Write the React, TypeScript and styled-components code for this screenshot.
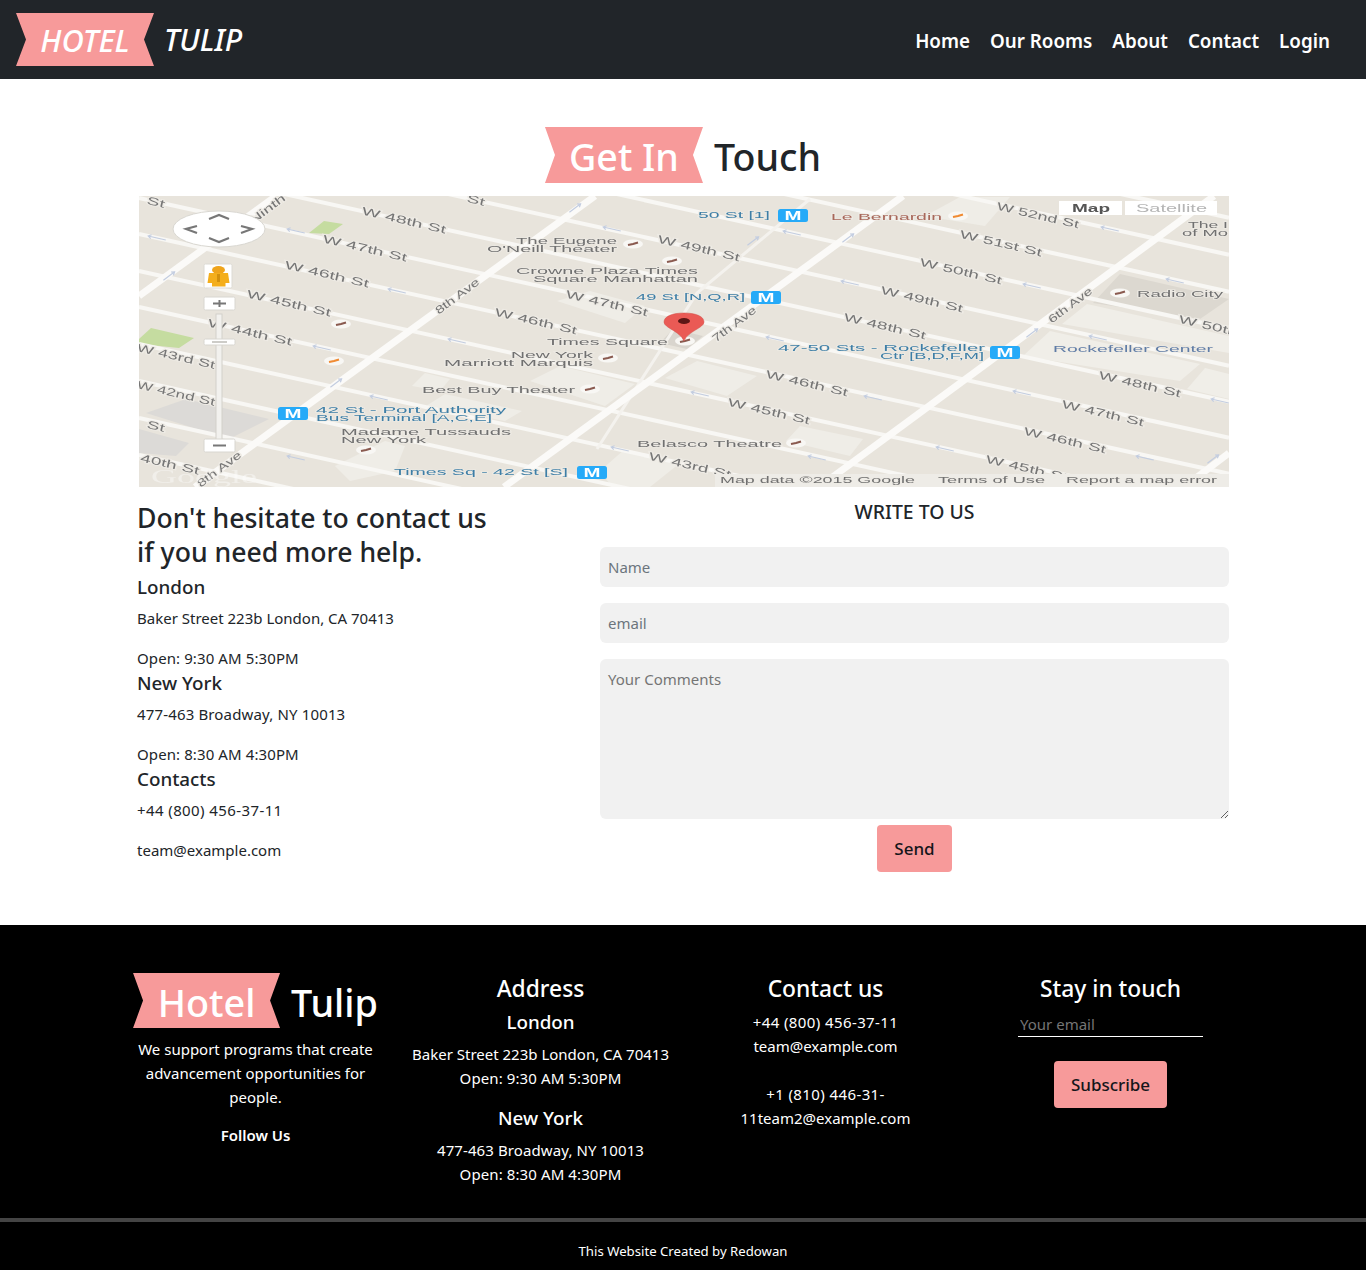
import React from "react";
import styled, { createGlobalStyle } from "styled-components";

const FONT = `"Noto Sans", "Open Sans", Arial, sans-serif`;
const PINK = "#f79a9a";

const Global = createGlobalStyle`
  * { box-sizing: border-box; }
  html, body { margin: 0; padding: 0; background: #fff; }
  body { font-family: ${FONT}; font-size: 15px; line-height: 24px; color: #212529; }
`;

const Page = styled.div`
  width: 1366px;
`;

const NavBar = styled.header`
  height: 79px;
  background: #212529;
  display: flex;
  align-items: center;
  justify-content: space-between;
  padding: 0 26px 0 16px;
`;

const Brand = styled.div`
  display: flex;
  align-items: center;
  gap: 10px;
  color: #fff;
  font-size: 30.8px;
  font-style: italic;
  font-weight: 500;
`;

const BrandWord = styled.span`
  font-size: 30px;
`;

const Ribbon = styled.span<{ $w: number; $h: number; $lift?: number }>`
  display: flex;
  align-items: center;
  justify-content: center;
  width: ${(p) => p.$w}px;
  height: ${(p) => p.$h}px;
  padding-top: ${(p) => p.$lift ?? 0}px;
  background: ${PINK};
  color: #fff;
  clip-path: polygon(0 0, 100% 0, calc(100% - 10px) 50%, 100% 100%, 0 100%, 10px 50%);
`;

const NavLinks = styled.nav`
  display: flex;
`;

const NavLink = styled.a`
  padding: 2px 10px 0;
  color: #fff;
  font-size: 18.8px;
  font-weight: 600;
  line-height: 30px;
`;

const Main = styled.main`
  width: 1092px;
  margin-left: 137px;
  padding: 48px 0 53px;
`;

const PageTitle = styled.h1`
  display: flex;
  justify-content: center;
  align-items: center;
  gap: 11px;
  height: 56px;
  margin: 0 0 13px;
  font-size: 37.6px;
  font-weight: 500;
  line-height: 48px;
`;

const TitleWord = styled.span`
  padding-top: 4px;
`;

const MapBox = styled.svg`
  display: block;
  width: 1090px;
  height: 291px;
  margin-left: auto;
`;

const ContactGrid = styled.section`
  display: grid;
  grid-template-columns: 1fr 629px;
  margin-top: 13px;
`;

const InfoTitle = styled.h3`
  margin: 0 0 6px;
  padding-top: 2px;
  font-size: 26.6px;
  font-weight: 500;
  line-height: 33.6px;
`;

const CityName = styled.h5`
  margin: 0 0 7px;
  font-size: 18.8px;
  font-weight: 500;
  line-height: 24px;
`;

const InfoLine = styled.p<{ $ls?: number }>`
  margin: 0 0 16px;
  font-size: 15px;
  line-height: 24px;
  letter-spacing: ${(p) => p.$ls ?? 0}px;
  &:last-of-type { margin-bottom: 1px; }
`;

const InfoGroup = styled.div``;

const ContactForm = styled.form`
  display: flex;
  flex-direction: column;
  align-items: stretch;
`;

const FormTitle = styled.h5`
  margin: 0 0 23px;
  font-size: 19.4px;
  font-weight: 500;
  line-height: 24px;
  text-align: center;
`;

const TextInput = styled.input`
  height: 40px;
  margin-bottom: 16px;
  padding: 0 8px;
  border: 0;
  border-radius: 6px;
  background: #f1f1f1;
  font: 15px ${FONT};
  &::placeholder { color: #6c757d; opacity: 1; }
`;

const TextArea = styled.textarea`
  height: 160px;
  margin-bottom: 6px;
  padding: 8px;
  border: 0;
  border-radius: 6px;
  background: #f1f1f1;
  font: 15px/24px ${FONT};
  &::placeholder { color: #757575; opacity: 1; }
`;

const PinkButton = styled.button<{ $w: number }>`
  width: ${(p) => p.$w}px;
  height: 47px;
  align-self: center;
  padding: 0;
  border: 0;
  border-radius: 4px;
  background: ${PINK};
  color: #14161a;
  font: 500 17px ${FONT};
`;

const Footer = styled.footer`
  height: 345px;
  background: #000;
  color: #fff;
  display: flex;
  flex-direction: column;
`;

const FooterGrid = styled.div`
  flex: 1;
  display: grid;
  grid-template-columns: repeat(4, 285px);
  margin-left: 113px;
  padding-top: 48px;
  text-align: center;
`;

const FooterCol = styled.div`
  padding: 0 12px;
`;

const FooterBrand = styled.div`
  display: flex;
  justify-content: center;
  align-items: center;
  gap: 11px;
  height: 55px;
  margin-bottom: 9px;
  font-size: 37.8px;
  font-weight: 500;
  line-height: 48px;
`;

const FooterHeading = styled.h4`
  margin: 1px 0 7px;
  font-size: 22.8px;
  font-weight: 500;
  line-height: 29px;
`;

const FooterCity = styled.h5`
  margin: 0 0 8px;
  font-size: 18.8px;
  font-weight: 500;
  line-height: 24px;
`;

const FooterText = styled.p<{ $gap?: number; $ls?: number }>`
  margin: 0 0 ${(p) => p.$gap ?? 0}px;
  font-size: 15px;
  line-height: 24px;
  letter-spacing: ${(p) => p.$ls ?? 0}px;
`;

const FollowTitle = styled.h6`
  margin: 14px 0 0;
  font-size: 15px;
  font-weight: 600;
  line-height: 24px;
`;

const SubscribeForm = styled.form`
  display: flex;
  flex-direction: column;
  align-items: center;
`;

const EmailInput = styled.input`
  width: 185px;
  height: 25px;
  margin: 2px 0 24px;
  padding: 0 2px;
  border: 0;
  border-bottom: 1px solid #fff;
  background: transparent;
  color: #fff;
  font: 15px ${FONT};
  &::placeholder { color: #757575; opacity: 1; }
`;

const Rule = styled.hr`
  width: 100%;
  height: 4px;
  margin: 0;
  border: 0;
  background: #444;
`;

const Credit = styled.p`
  margin: 0;
  height: 48px;
  padding-top: 10px;
  display: flex;
  align-items: center;
  justify-content: center;
  font-size: 13.2px;
`;

const STREET_SLOPE = 0.22;
const streets = [-218, -181, -144, -107, -70, -34, 2, 38, 75, 111, 148, 185, 222, 259];
const aves: [number, number, number, number][] = [
  [276, 195, 139, 295],
  [595, 195, 195, 486],
  [903, 195, 504, 486],
  [1214, 195, 819, 486],
  [1229, 452, 1184, 486],
];

type Lab = [string, number, number, number];
const rotated: Lab[] = [
  ["W 48th St", 404, 219, 86],
  ["W 47th St", 365, 247, 86],
  ["W 46th St", 327, 273, 86],
  ["W 45th St", 289, 302, 86],
  ["W 44th St", 250, 331, 86],
  ["W 43rd St", 176, 355, 80],
  ["W 42nd St", 176, 392, 80],
  ["St", 156, 425, 18],
  ["40th St", 170, 463, 60],
  ["W 47th St", 607, 302, 84],
  ["W 46th St", 536, 320, 84],
  ["W 49th St", 699, 247, 84],
  ["W 46th St", 807, 382, 84],
  ["W 45th St", 769, 410, 84],
  ["W 43rd St", 690, 464, 84],
  ["W 48th St", 885, 325, 84],
  ["W 52nd St", 1038, 214, 84],
  ["W 51st St", 1001, 242, 84],
  ["W 50th St", 961, 270, 84],
  ["W 49th St", 922, 298, 84],
  ["W 48th St", 1140, 383, 84],
  ["W 47th St", 1103, 412, 84],
  ["W 46th St", 1065, 439, 84],
  ["W 45th St", 1027, 467, 84],
  ["W 50th St", 1220, 327, 84],
  ["St", 156, 201, 18],
  ["St", 476, 199, 18],
];
const aveLabels: Lab[] = [
  ["Ninth", 267, 208, 42],
  ["8th Ave", 457, 295, 52],
  ["8th Ave", 219, 468, 52],
  ["7th Ave", 734, 323, 52],
  ["6th Ave", 1070, 304, 52],
];
type Flat = [string, number, number, number, string?];
const BLUE = "#3d7ea6";
const flat: Flat[] = [
  ["50 St [1]", 698, 217, 72, BLUE],
  ["Le Bernardin", 831, 219, 111, "#a8675a"],
  ["The Eugene", 516, 243, 101],
  ["O'Neill Theater", 487, 251, 130],
  ["Crowne Plaza Times", 516, 273, 182],
  ["Square Manhattan", 533, 281, 165],
  ["49 St [N,Q,R]", 636, 299, 109, BLUE],
  ["Radio City", 1137, 296, 86],
  ["The I", 1188, 227, 40],
  ["of Mo", 1182, 235, 46],
  ["Times Square", 547, 344, 121],
  ["New York", 511, 357, 82],
  ["Marriott Marquis", 444, 365, 149],
  ["Best Buy Theater", 422, 392, 153],
  ["42 St - Port Authority", 316, 412, 190, BLUE],
  ["Bus Terminal [A,C,E]", 316, 420, 176, BLUE],
  ["Madame Tussauds", 341, 434, 170],
  ["New York", 341, 442, 85],
  ["Times Sq - 42 St [S]", 394, 474, 174, BLUE],
  ["47-50 Sts - Rockefeller", 778, 350, 207, BLUE],
  ["Ctr [B,D,F,M]", 880, 358, 104, BLUE],
  ["Rockefeller Center", 1053, 351, 160, "#5f7ca6"],
  ["Belasco Theatre", 637, 446, 145],
  ["Map data ©2015 Google", 720, 482, 195],
  ["Terms of Use", 938, 482, 107],
  ["Report a map error", 1066, 482, 151],
];
const badges = [
  [778, 208], [751, 290], [990, 345], [278, 406], [577, 465],
];
const pois: [number, number, string][] = [
  [341, 323, "#8a5a50"], [633, 243, "#8a5a50"], [672, 260, "#8a5a50"], [608, 357, "#8a5a50"],
  [590, 388, "#8a5a50"], [366, 449, "#8a5a50"], [796, 442, "#8a5a50"], [685, 340, "#8a5a50"],
  [1120, 292, "#8a5a50"], [334, 360, "#f08a30"], [958, 215, "#f08a30"],
];
const streetArrows = [
  [157, 237], [296, 230], [397, 290], [322, 347], [379, 397], [296, 457], [457, 340],
  [612, 228], [792, 232], [850, 282], [775, 338], [700, 393], [620, 448], [817, 457],
  [873, 397], [1110, 228], [1032, 285], [1098, 337], [1175, 280], [1022, 392], [945, 448],
  [1145, 457], [1220, 400],
];
const aveArrows = [
  [169, 275], [336, 382], [575, 207], [753, 240], [848, 237], [1032, 332], [1213, 458],
];
const blocks: [string, string][] = [
  ["309,232 324,220 343,223 329,233", "#c5dca0"],
  ["139,338 151,327 194,337 179,347 139,343", "#c5dca0"],
  ["146,412 186,398 269,418 229,438", "#dcdad7"],
  ["139,428 189,442 176,455 139,452", "#dcdad7"],
  ["1093,302 1120,273 1229,298 1200,318", "#dcd8d0"],
  ["1062,323 1087,303 1229,335 1229,352", "#f0eee8"],
  ["1023,355 1050,330 1200,363 1180,380", "#f0eee8"],
  ["1187,388 1205,367 1229,373 1229,398", "#f0eee8"],
  ["665,377 697,360 757,375 727,395", "#efede7"],
  ["660,342 673,328 703,335 687,348", "#d9d5ce"],
  ["530,380 560,365 635,383 605,405", "#efede7"],
  ["412,385 425,372 450,378 440,390", "#efede7"],
  ["426,405 445,393 522,410 505,420", "#efede7"],
  ["335,465 385,440 405,445 395,470 350,480", "#efede7"],
  ["557,300 590,290 645,305 625,322", "#efede7"],
  ["925,215 960,196 1010,196 985,225", "#efede7"],
  ["786,440 800,425 863,438 850,455", "#efede7"],
  ["600,470 625,448 680,462 650,486 612,486", "#efede7"],
];

const MapDrawing = () => (
  <MapBox viewBox="139 195 1090 291" role="img" aria-label="Map of Times Square">
    <defs>
      <filter id="soft" x="0" y="0" width="100%" height="100%">
        <feGaussianBlur stdDeviation="0.6" />
      </filter>
    </defs>
    <g filter="url(#soft)">
      <rect x="139" y="195" width="1090" height="291" fill="#e8e4dc" />
      {blocks.map(([p, c], i) => <polygon key={i} points={p} fill={c} />)}
      {streets.map((c) => (
        <line key={c} x1="139" y1={195 + c} x2="1229" y2={195 + c + 1090 * STREET_SLOPE} stroke="#f8f7f4" strokeWidth="4" />
      ))}
      <polyline points="810,198 697,292 597,448" fill="none" stroke="#f4f2ee" strokeWidth="3" />
      {aves.map((a, i) => (
        <line key={i} x1={a[0]} y1={a[1]} x2={a[2]} y2={a[3]} stroke="#fbfaf8" strokeWidth="7" />
      ))}
      {streetArrows.map(([x, y], i) => (
        <g key={i} transform={`rotate(13 ${x} ${y})`} stroke="#c3cde0" strokeWidth="1.2" fill="none">
          <path d={`M${x - 9} ${y}H${x + 9}M${x - 6} ${y - 2}L${x - 9} ${y}L${x - 6} ${y + 2}`} />
        </g>
      ))}
      {aveArrows.map(([x, y], i) => (
        <g key={i} transform={`rotate(-37 ${x} ${y})`} stroke="#c3cde0" strokeWidth="1.2" fill="none">
          <path d={`M${x - 7} ${y}H${x + 7}M${x + 4} ${y - 2}L${x + 7} ${y}L${x + 4} ${y + 2}`} />
        </g>
      ))}
      {rotated.map(([t, x, y, w], i) => (
        <text key={i} x={x} y={y + 4} transform={`rotate(13 ${x} ${y})`} textAnchor="middle" textLength={w} lengthAdjust="spacingAndGlyphs"
          fontFamily="Liberation Sans, Arial, sans-serif" fontSize="11" fill="#757575" stroke="#eeebe5" strokeWidth="2" paintOrder="stroke">{t}</text>
      ))}
      {aveLabels.map(([t, x, y, w], i) => (
        <text key={i} x={x} y={y + 4} transform={`rotate(-37 ${x} ${y})`} textAnchor="middle" textLength={w} lengthAdjust="spacingAndGlyphs"
          fontFamily="Liberation Sans, Arial, sans-serif" fontSize="11" fill="#757575" stroke="#eeebe5" strokeWidth="2" paintOrder="stroke">{t}</text>
      ))}
      <rect x="715" y="473" width="514" height="13" fill="#eeece7" />
      {flat.map(([t, x, y, w, c], i) => (
        <text key={i} x={x} y={y} textLength={w} lengthAdjust="spacingAndGlyphs"
          fontFamily="Liberation Sans, Arial, sans-serif" fontSize="9" fill={c ?? "#707070"} stroke="#eeebe5" strokeWidth="1.2" paintOrder="stroke">{t}</text>
      ))}
      <text x="151" y="482" textLength="106" lengthAdjust="spacingAndGlyphs" fontFamily="Liberation Serif, serif" fontSize="19" fill="#ffffff" fillOpacity="0.4">Google</text>
      {badges.map(([x, y], i) => (
        <g key={i}>
          <rect x={x} y={y} width="30" height="13" rx="2.5" fill="#25aaf8" />
          <text x={x + 15} y={y + 10.5} textAnchor="middle" textLength="17" lengthAdjust="spacingAndGlyphs" fontFamily="Liberation Sans, Arial, sans-serif" fontWeight="700" fontSize="12" fill="#fff">M</text>
        </g>
      ))}
      {pois.map(([x, y, c], i) => (
        <g key={i}>
          <ellipse cx={x} cy={y} rx="10" ry="4.5" fill="#f8f7f4" />
          <path d={`M${x - 5} ${y + 1}L${x} ${y}L${x + 5} ${y - 1.5}`} stroke={c} strokeWidth="2.2" fill="none" />
        </g>
      ))}
      {/* marker */}
      <path d="M684 340 C680 330 664 327 664 321 C664 315 673 312 684 312 C695 312 704 315 704 321 C704 327 688 330 684 340Z" fill="#ea5a55" stroke="#d04a45" strokeWidth="0.5" />
      <ellipse cx="684" cy="320" rx="6" ry="3" fill="#5c1613" />
      {/* pan control */}
      <ellipse cx="219" cy="228" rx="46" ry="18" fill="#fff" stroke="#d8d6d0" strokeWidth="1" />
      <g stroke="#777" strokeWidth="2.2" fill="none">
        <path d="M209 218L219 214L229 218" />
        <path d="M209 237L219 241L229 237" />
        <path d="M197 225L186 228L197 232" />
        <path d="M241 225L252 228L241 232" />
      </g>
      {/* pegman */}
      <rect x="204" y="263" width="28" height="24" rx="1.5" fill="#fff" stroke="#dcdad4" />
      <ellipse cx="218.5" cy="269" rx="6.5" ry="4" fill="#efa41a" />
      <path d="M209 272H228L229.5 282H225.5V285.5H212V282H207.5Z" fill="#f4ae1e" />
      <rect x="217" y="273" width="3" height="8" fill="#d2900f" />
      {/* zoom control */}
      <rect x="216" y="313" width="6" height="130" fill="#f2f1ee" stroke="#d2d0ca" strokeWidth="1" />
      <rect x="204" y="296" width="31" height="13" rx="1.5" fill="#fff" stroke="#d8d6d0" />
      <path d="M213 302.5H226M219.5 299V306" stroke="#777" strokeWidth="2" />
      <rect x="204" y="338" width="31" height="6" rx="1.5" fill="#fff" stroke="#d8d6d0" />
      <path d="M212 341H227" stroke="#bdbbb6" strokeWidth="1.5" />
      <rect x="204" y="438" width="31" height="13" rx="1.5" fill="#fff" stroke="#d8d6d0" />
      <path d="M213 444.5H226" stroke="#777" strokeWidth="2" />
      {/* map type */}
      <rect x="1059" y="200" width="63" height="14" fill="#fff" />
      <text x="1072" y="211" textLength="38" lengthAdjust="spacingAndGlyphs" fontFamily="Liberation Sans, Arial, sans-serif" fontSize="10" fontWeight="700" fill="#555">Map</text>
      <rect x="1125" y="200" width="92" height="14" fill="#fff" />
      <text x="1136" y="211" textLength="71" lengthAdjust="spacingAndGlyphs" fontFamily="Liberation Sans, Arial, sans-serif" fontSize="10" fill="#b5b5b5">Satellite</text>
    </g>
  </MapBox>
);

export default function App() {
  return (
    <Page>
      <Global />
      <NavBar>
        <Brand>
          <Ribbon $w={138} $h={53}>HOTEL</Ribbon>
          <BrandWord>TULIP</BrandWord>
        </Brand>
        <NavLinks>
          {["Home", "Our Rooms", "About", "Contact", "Login"].map((l) => (
            <NavLink key={l}>{l}</NavLink>
          ))}
        </NavLinks>
      </NavBar>

      <Main>
        <PageTitle>
          <Ribbon $w={158} $h={56} $lift={4}>Get In</Ribbon>
          <TitleWord>Touch</TitleWord>
        </PageTitle>
        <MapDrawing />
        <ContactGrid>
          <div>
            <InfoTitle>Don't hesitate to contact us<br />if you need more help.</InfoTitle>
            <InfoGroup>
              <CityName>London</CityName>
              <InfoLine>Baker Street 223b London, CA 70413</InfoLine>
              <InfoLine $ls={0.1}>Open: 9:30 AM 5:30PM</InfoLine>
            </InfoGroup>
            <InfoGroup>
              <CityName>New York</CityName>
              <InfoLine $ls={0.15}>477-463 Broadway, NY 10013</InfoLine>
              <InfoLine $ls={0.1}>Open: 8:30 AM 4:30PM</InfoLine>
            </InfoGroup>
            <InfoGroup>
              <CityName>Contacts</CityName>
              <InfoLine $ls={0.4}>+44 (800) 456-37-11</InfoLine>
              <InfoLine>team@example.com</InfoLine>
            </InfoGroup>
          </div>
          <ContactForm>
            <FormTitle>WRITE TO US</FormTitle>
            <TextInput placeholder="Name" />
            <TextInput placeholder="email" />
            <TextArea placeholder="Your Comments" />
            <PinkButton type="button" $w={75}>Send</PinkButton>
          </ContactForm>
        </ContactGrid>
      </Main>

      <Footer>
        <FooterGrid>
          <FooterCol>
            <FooterBrand>
              <Ribbon $w={147} $h={55} $lift={4}>Hotel</Ribbon>
              <TitleWord>Tulip</TitleWord>
            </FooterBrand>
            <FooterText>We support programs that create advancement opportunities for people.</FooterText>
            <FollowTitle>Follow Us</FollowTitle>
          </FooterCol>
          <FooterCol>
            <FooterHeading>Address</FooterHeading>
            <FooterCity>London</FooterCity>
            <FooterText>Baker Street 223b London, CA 70413</FooterText>
            <FooterText $gap={16} $ls={0.1}>Open: 9:30 AM 5:30PM</FooterText>
            <FooterCity>New York</FooterCity>
            <FooterText $ls={0.1}>477-463 Broadway, NY 10013</FooterText>
            <FooterText $ls={0.1}>Open: 8:30 AM 4:30PM</FooterText>
          </FooterCol>
          <FooterCol>
            <FooterHeading>Contact us</FooterHeading>
            <FooterText $ls={0.4}>+44 (800) 456-37-11</FooterText>
            <FooterText $gap={24}>team@example.com</FooterText>
            <FooterText $ls={0.4}>+1 (810) 446-31-</FooterText>
            <FooterText>11team2@example.com</FooterText>
          </FooterCol>
          <FooterCol>
            <FooterHeading>Stay in touch</FooterHeading>
            <SubscribeForm>
              <EmailInput placeholder="Your email" />
              <PinkButton type="button" $w={113}>Subscribe</PinkButton>
            </SubscribeForm>
          </FooterCol>
        </FooterGrid>
        <Rule />
        <Credit>This Website Created by Redowan</Credit>
      </Footer>
    </Page>
  );
}
